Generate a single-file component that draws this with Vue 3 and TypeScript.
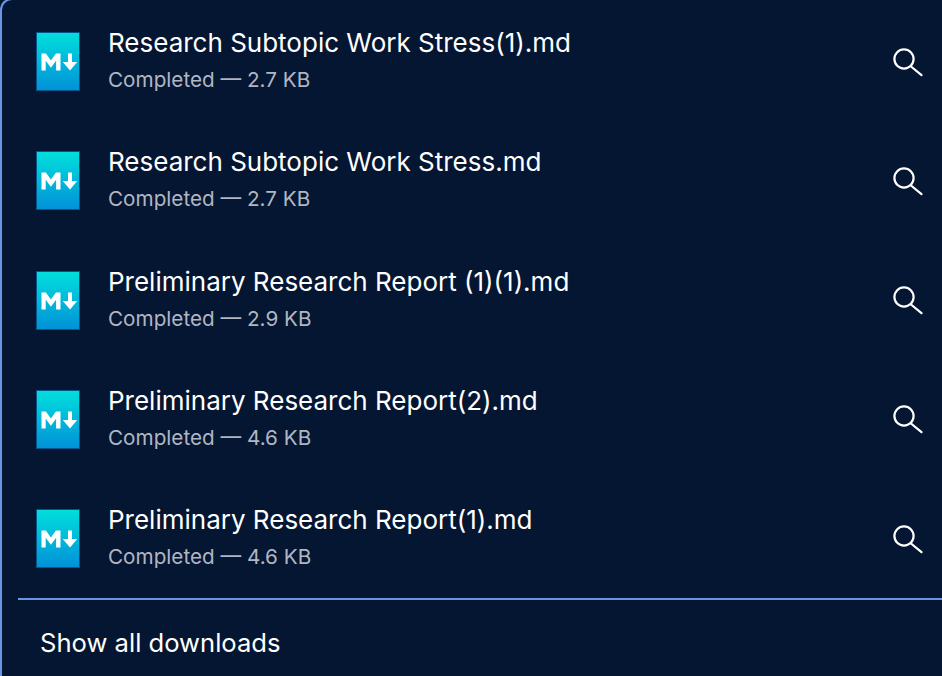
<script setup lang="ts">
interface DownloadItem {
  name: string
  size: string
}

const items: DownloadItem[] = [
  { name: 'Research Subtopic Work Stress(1).md', size: '2.7 KB' },
  { name: 'Research Subtopic Work Stress.md', size: '2.7 KB' },
  { name: 'Preliminary Research Report (1)(1).md', size: '2.9 KB' },
  { name: 'Preliminary Research Report(2).md', size: '4.6 KB' },
  { name: 'Preliminary Research Report(1).md', size: '4.6 KB' },
]
</script>

<template>
  <div class="panel">
    <ul class="list">
      <li v-for="(item, i) in items" :key="item.name" class="row">
        <svg class="file-icon" width="44" height="59" viewBox="0 0 44 59">
          <defs>
            <linearGradient :id="'g' + i" x1="0" y1="0" x2="0" y2="1">
              <stop offset="0" stop-color="#02dfdc" />
              <stop offset="1" stop-color="#0191d8" />
            </linearGradient>
          </defs>
          <rect x="0.5" y="0.5" width="43" height="58" :fill="'url(#g' + i + ')'" stroke="#04558a" />
          <path d="M5.5 38.5V21.5h4.4l5 7 5-7h4.6v17h-4.4v-9.8l-5.2 7-5.2-7v9.8z" fill="#fff" />
          <path d="M32 21.5h4v8.5h5.2l-7.2 8.5-7.2-8.5H32z" fill="#fff" />
        </svg>
        <div class="info">
          <div class="name">{{ item.name }}</div>
          <div class="status">Completed — {{ item.size }}</div>
        </div>
        <svg class="search" width="32" height="32" viewBox="0 0 32 32" fill="none" stroke="#fff" stroke-width="2.2" stroke-linecap="round">
          <circle cx="12" cy="13" r="9.6" />
          <path d="M19 20.5l10.5 8.7" />
        </svg>
      </li>
    </ul>
    <div class="footer">Show all downloads</div>
  </div>
</template>

<style>
html,
body {
  margin: 0;
  background: #051633;
}
</style>

<style scoped>
.panel {
  box-sizing: border-box;
  width: 942px;
  height: 676px;
  overflow: hidden;
  background: #051633;
  font-family: Inter, "Liberation Sans", sans-serif;
  color: #fff;
  position: relative;
}

/* panel outline continues above the visible crop */
.panel::before {
  content: "";
  position: absolute;
  left: 0;
  top: -2px;
  width: 100%;
  height: 100%;
  border-left: 2px solid #6a94e4;
  border-top: 2px solid #6a94e4;
  border-top-left-radius: 12px;
  pointer-events: none;
}

.list {
  list-style: none;
  margin: 0;
  padding: 2px 0 0;
}

.row {
  display: flex;
  align-items: center;
  height: 119.25px;
  padding: 0 18px 0 36px;
}

.file-icon {
  flex: none;
}

.info {
  flex: 1;
  margin-left: 28px;
  padding-bottom: 4px;
}

.name {
  font-size: 26px;
  line-height: 32px;
}

.status {
  margin-top: 9px;
  font-size: 20.7px;
  line-height: 24px;
  color: #b0b6c2;
}

.footer {
  margin-left: 18px;
  padding: 27px 0 0 22px;
  border-top: 2px solid #6a94e4;
  font-size: 25.6px;
  line-height: 32px;
}
</style>
